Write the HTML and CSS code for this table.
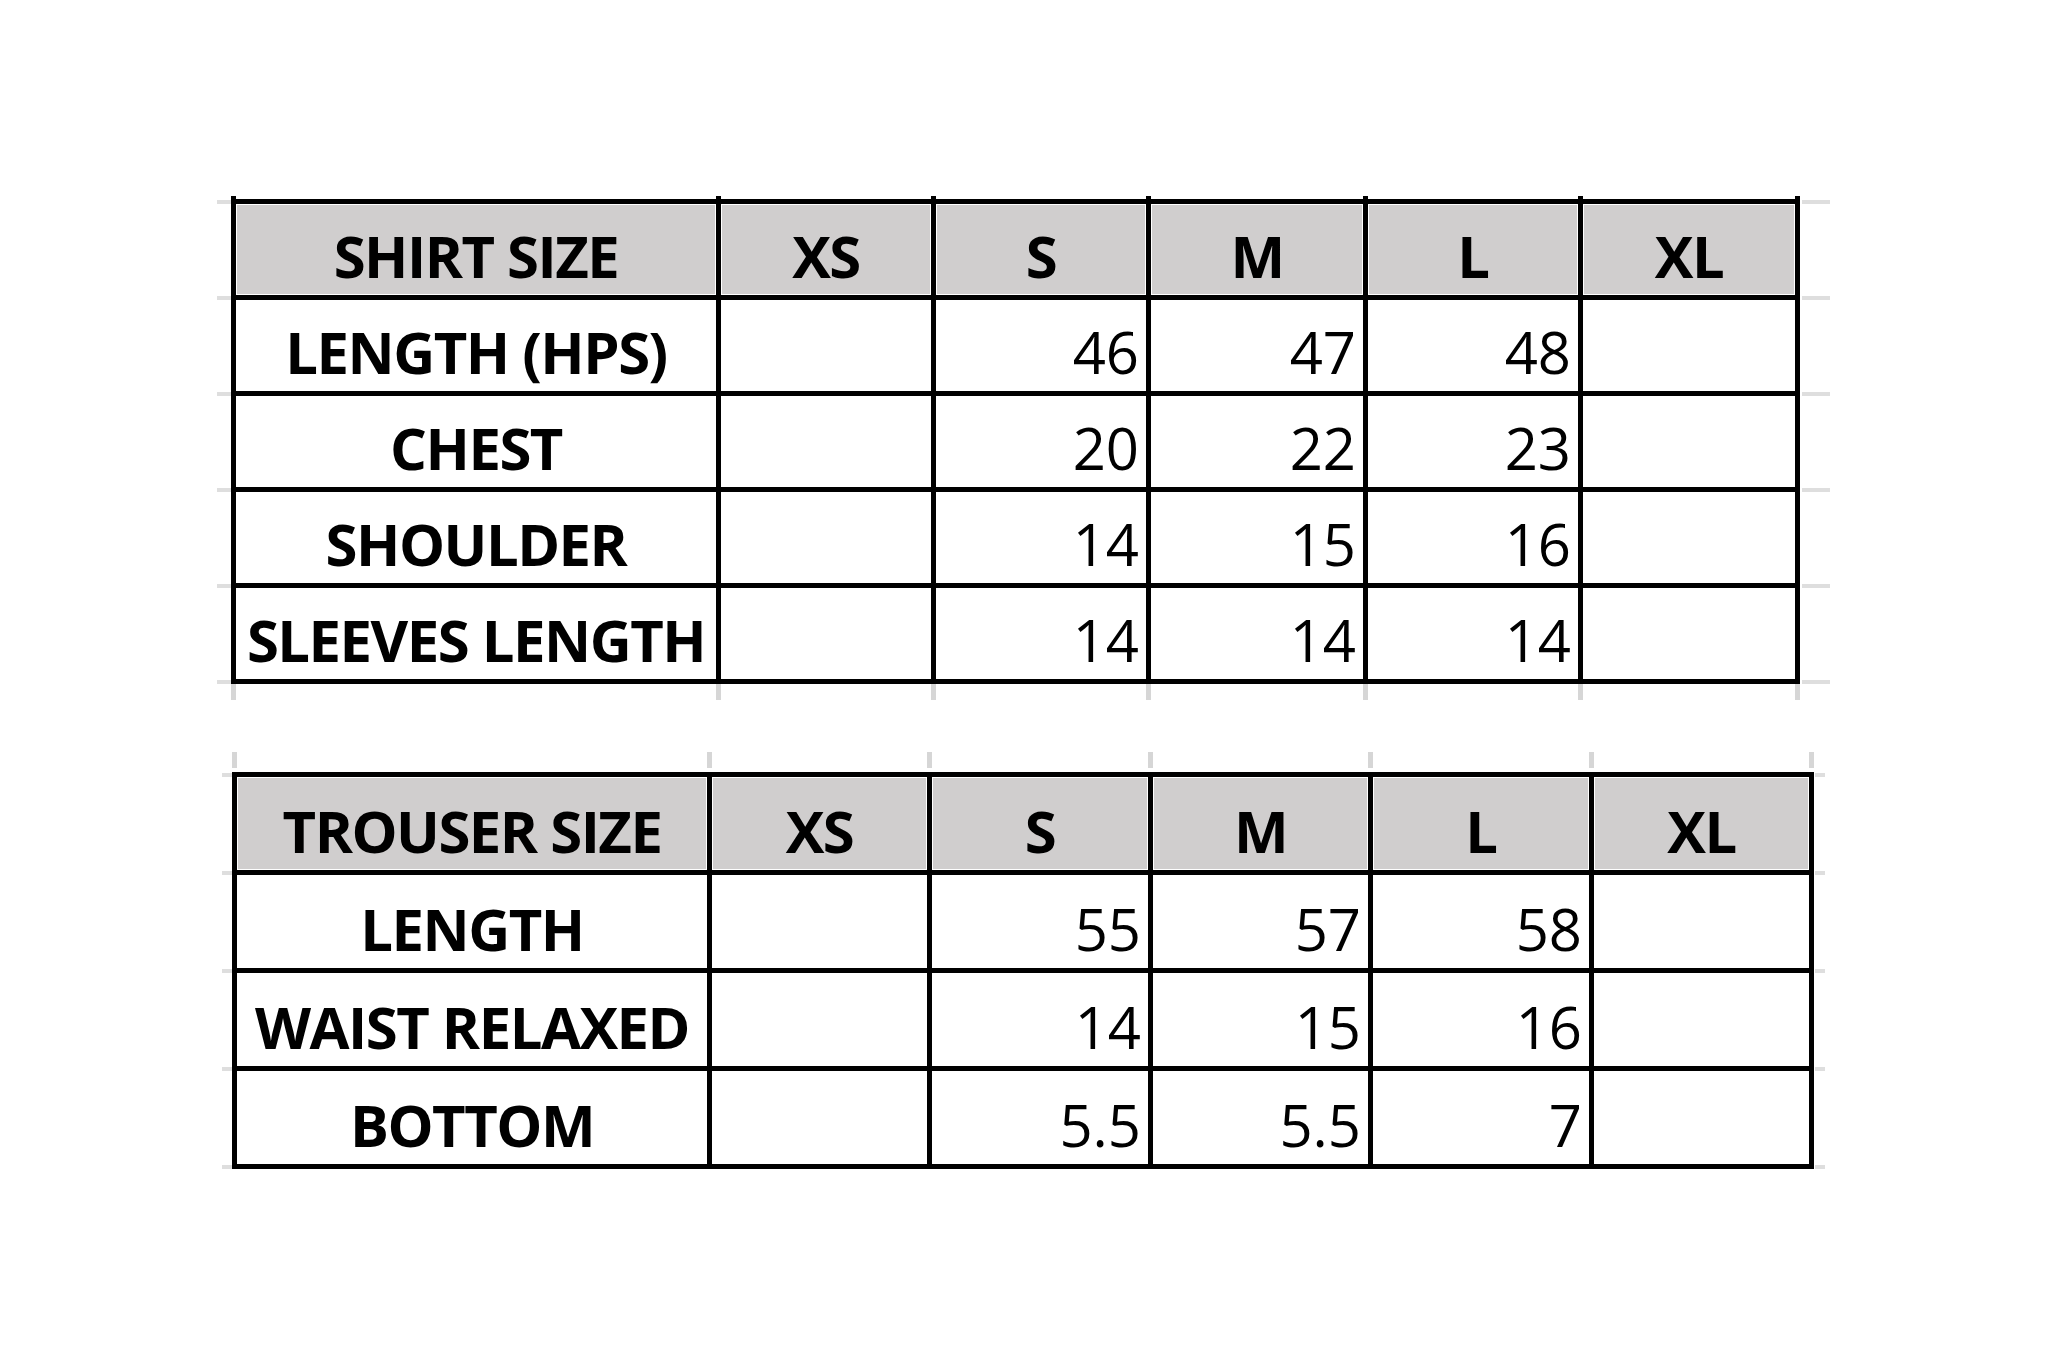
FILE: index.html
```html
<!DOCTYPE html>
<html lang="en">
<head>
<meta charset="utf-8">
<title>Size Chart</title>
<link rel="stylesheet" href="styles.css">
</head>
<body>
<div class="page">
  <div class="set set1">
    <div class="ticks ticks-cap"><span></span><span></span><span></span><span></span><span></span><span></span></div>
    <div class="sheet">
      <div class="row head">
        <div class="cell label">SHIRT SIZE</div><div class="cell">XS</div><div class="cell">S</div><div class="cell">M</div><div class="cell">L</div><div class="cell">XL</div>
      </div>
      <div class="row">
        <div class="cell label">LENGTH (HPS)</div><div class="cell num"></div><div class="cell num">46</div><div class="cell num">47</div><div class="cell num">48</div><div class="cell num"></div>
      </div>
      <div class="row">
        <div class="cell label">CHEST</div><div class="cell num"></div><div class="cell num">20</div><div class="cell num">22</div><div class="cell num">23</div><div class="cell num"></div>
      </div>
      <div class="row">
        <div class="cell label">SHOULDER</div><div class="cell num"></div><div class="cell num">14</div><div class="cell num">15</div><div class="cell num">16</div><div class="cell num"></div>
      </div>
      <div class="row">
        <div class="cell label">SLEEVES LENGTH</div><div class="cell num"></div><div class="cell num">14</div><div class="cell num">14</div><div class="cell num">14</div><div class="cell num"></div>
      </div>
    </div>
    <div class="ticks ticks-below"><span></span><span></span><span></span><span></span><span></span><span></span></div>
  </div>

  <div class="set set2">
    <div class="ticks ticks-above"><span></span><span></span><span></span><span></span><span></span><span></span></div>
    <div class="sheet">
      <div class="row head">
        <div class="cell label">TROUSER SIZE</div><div class="cell">XS</div><div class="cell">S</div><div class="cell">M</div><div class="cell">L</div><div class="cell">XL</div>
      </div>
      <div class="row">
        <div class="cell label">LENGTH</div><div class="cell num"></div><div class="cell num">55</div><div class="cell num">57</div><div class="cell num">58</div><div class="cell num"></div>
      </div>
      <div class="row">
        <div class="cell label">WAIST RELAXED</div><div class="cell num"></div><div class="cell num">14</div><div class="cell num">15</div><div class="cell num">16</div><div class="cell num"></div>
      </div>
      <div class="row">
        <div class="cell label">BOTTOM</div><div class="cell num"></div><div class="cell num">5.5</div><div class="cell num">5.5</div><div class="cell num">7</div><div class="cell num"></div>
      </div>
    </div>
  </div>
</div>
</body>
</html>
```

FILE: styles.css
```css
* {
  box-sizing: border-box;
}

html,
body {
  margin: 0;
  padding: 0;
  background: #ffffff;
}

body {
  font-family: "Open Sans", "Liberation Sans", sans-serif;
  color: #000000;
}

.page {
  width: 2048px;
  height: 1367px;
  padding: 196px 0 0 231px;
  overflow: hidden;
}

.set1 {
  --cols: 485px 215px 215px 217px 215px 217px;
  --row-h: 96px;
  --lt-left: -19px;
  --lt-w: 14px;
  --rt-gap: 2px;
  --rt-w: 28px;
}

.set2 {
  --cols: 475px 220px 221px 220px 221px 220px;
  --row-h: 98px;
  --lt-left: -15px;
  --lt-w: 10px;
  --rt-gap: 1px;
  --rt-w: 10px;
  margin-left: 1px;
  margin-top: 52px;
}

/* spreadsheet grid-line stubs */
.ticks {
  display: grid;
  grid-template-columns: var(--cols);
  width: max-content;
  border-left: 5px solid #d6d6d6;
}

.ticks span {
  border-right: 5px solid #d6d6d6;
}

.ticks-cap {
  height: 3px;
  border-left-color: #000000;
}

.ticks-cap span {
  border-right-color: #000000;
}

.ticks-below {
  height: 16px;
}

.ticks-above {
  height: 16px;
  margin-bottom: 4px;
}

/* table */
.sheet {
  position: relative;
  width: max-content;
  border-top: 5px solid #000000;
  border-left: 5px solid #000000;
}

.sheet::before,
.sheet::after,
.row::before,
.row::after {
  content: "";
  position: absolute;
  height: 4px;
  background: #dedede;
}

.sheet::before {
  top: -4.5px;
  left: var(--lt-left);
  width: var(--lt-w);
}

.sheet::after {
  top: -4.5px;
  left: calc(100% + var(--rt-gap));
  width: var(--rt-w);
}

.row {
  position: relative;
  display: grid;
  grid-template-columns: var(--cols);
  height: var(--row-h);
}

.row::before {
  bottom: 0.5px;
  left: var(--lt-left);
  width: var(--lt-w);
}

.row::after {
  bottom: 0.5px;
  left: calc(100% + var(--rt-gap));
  width: var(--rt-w);
}

.cell {
  display: flex;
  align-items: flex-end;
  justify-content: center;
  padding: 0 7px 10px 7px;
  border-right: 5px solid #000000;
  border-bottom: 5px solid #000000;
  font-size: 58px;
  line-height: 1;
  white-space: nowrap;
}

.head .cell {
  background: #d0cece;
  box-shadow: inset 0 0 0 1px #ffffff;
  font-weight: 700;
  letter-spacing: -1.5px;
}

.label {
  font-weight: 700;
  letter-spacing: -1.5px;
}

.num {
  justify-content: flex-end;
  font-weight: 400;
}
```
